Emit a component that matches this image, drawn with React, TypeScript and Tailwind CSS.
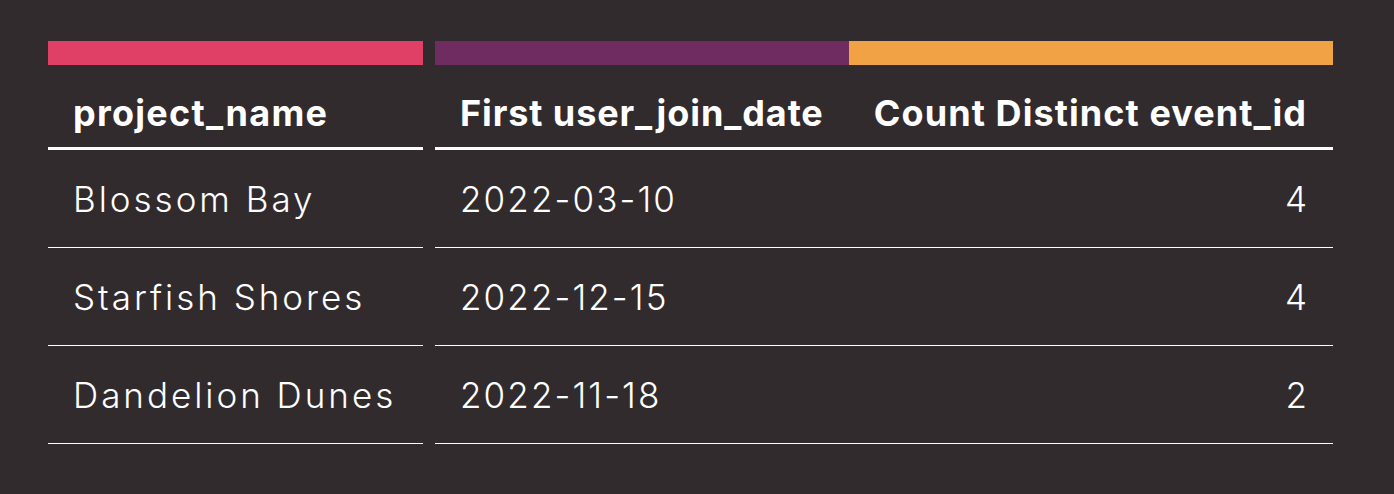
import React from "react";

const rows = [
  { name: "Blossom Bay", date: "2022-03-10", count: "4" },
  { name: "Starfish Shores", date: "2022-12-15", count: "4" },
  { name: "Dandelion Dunes", date: "2022-11-18", count: "2" },
];

export default function App() {
  return (
    <div
      className="w-[1394px] h-[494px] bg-[#312b2e] text-white pt-[41px] pl-[48px]"
      style={{ fontFamily: "Inter, 'Open Sans', sans-serif" }}
    >
      <div className="flex gap-[12px]">
        <div className="w-[375px] h-[24px] bg-[#e04066]" />
        <div className="flex w-[898px]">
          <div className="w-[414px] h-[24px] bg-[#6e2c60]" />
          <div className="w-[484px] h-[24px] bg-[#f0a244]" />
        </div>
      </div>
      <div className="flex gap-[12px]">
        <div className="w-[375px] h-[85px] border-b-[3px] border-white flex items-center pl-[25px] pt-[13px] text-[36px] font-bold tracking-[0.035em]">
          project_name
        </div>
        <div className="flex w-[898px] h-[85px] border-b-[3px] border-white text-[36px] font-bold tracking-[0.03em]">
          <div className="w-[414px] flex items-center pl-[25px] pt-[13px] tracking-[0.025em]">First user_join_date</div>
          <div className="w-[484px] flex items-center justify-end pr-[26px] pt-[13px]">Count Distinct event_id</div>
        </div>
      </div>
      {rows.map((r) => (
        <div key={r.name} className="flex gap-[12px]">
          <div className="w-[375px] h-[98px] border-b border-white flex items-center pl-[25px] pt-[2px] text-[35px] font-light tracking-[0.085em]">
            {r.name}
          </div>
          <div className="flex w-[898px] h-[98px] border-b border-white pt-[2px] text-[35px] font-light tracking-[0.06em]">
            <div className="w-[414px] flex items-center pl-[25px]">{r.date}</div>
            <div className="w-[484px] flex items-center justify-end pr-[26px]">
              <span className="tracking-normal">{r.count}</span>
            </div>
          </div>
        </div>
      ))}
    </div>
  );
}
